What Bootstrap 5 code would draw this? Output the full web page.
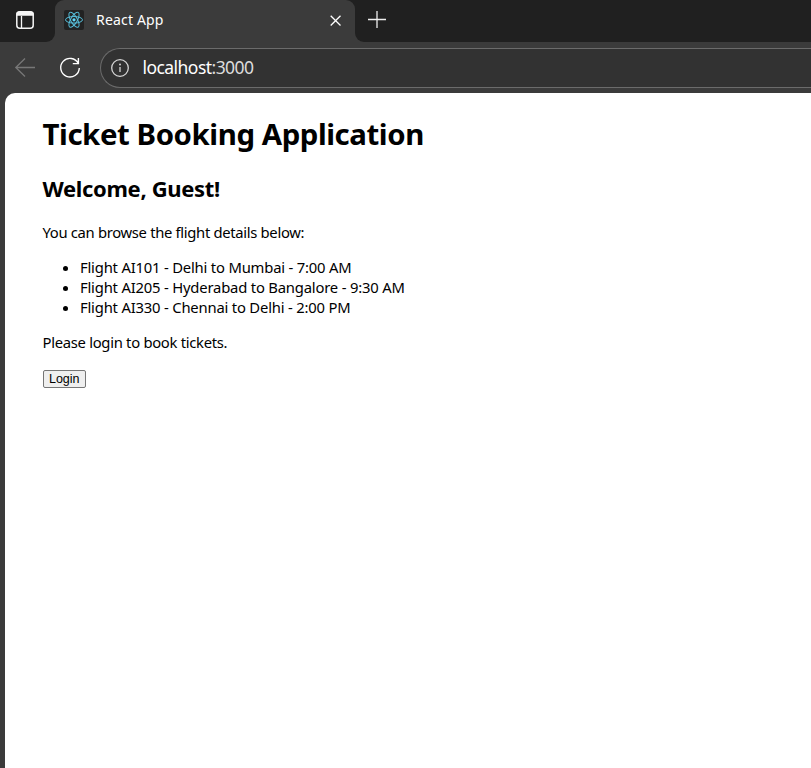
<!DOCTYPE html>
<html lang="en">
<head>
<meta charset="utf-8">
<meta name="viewport" content="width=device-width, initial-scale=1">
<title>React App</title>
<link rel="stylesheet" href="https://cdn.jsdelivr.net/npm/bootstrap@5.3.0/dist/css/bootstrap.min.css">
<style>
body{background:#3b3b3b;font-family:"Noto Sans","Open Sans",sans-serif}
svg{display:block;flex:none}
.tabstrip{height:42px;background:#3b3b3b}
.strip-left{width:55px;background:#202020;border-bottom-right-radius:9px}
.strip-right{background:#202020;border-bottom-left-radius:9px}
.tab-wrap{width:300px;background:#202020}
.tab-face{background:#3b3b3b;border-radius:9px 9px 0 0;padding:0 12px 2px 9px}
.tab-title{color:#fff;font-size:14px;letter-spacing:.18px;margin-left:12px;line-height:20px}
.toolbar{height:51px}
.address{height:40px;margin:6px 0 5px;border:1px solid #6b6b6b;border-right:0;border-radius:20px 0 0 20px;background:#323232;color:#fff;font-size:17.5px;padding-left:9px}
.address .url{margin-left:12.5px;padding-bottom:2px;line-height:24px;letter-spacing:-.55px}
.address .port{color:#dcdcdc}
.viewport{background:#fff;margin-left:5px;border-top-left-radius:10px;padding:21px 0 0 37.5px;color:#000;font-size:14.8px;line-height:20px}
.viewport h1{font-size:29.4px;line-height:40px;font-weight:700;margin:0 0 19px;letter-spacing:-.43px}
.viewport h2{font-size:22px;line-height:30px;font-weight:700;margin:0 0 19px;letter-spacing:-.33px}
.viewport p{margin:0 0 15px;letter-spacing:-.29px}
.viewport ul{margin:0 0 15px;padding-left:37.5px;letter-spacing:-.19px}
.viewport .intro{letter-spacing:-.32px}
.login{display:block;font:12.5px/15px "Liberation Sans",Arial,sans-serif;border:1px solid #767676;border-radius:2px;background:#efefef;color:#000;width:43.5px;height:18px;padding:0;margin-top:18px}
</style>
</head>
<body class="vh-100 overflow-hidden d-flex flex-column">
<header>
<div class="tabstrip d-flex">
<div class="strip-left d-flex">
<svg width="55" height="42" fill="none" stroke="#f5f5f5"><rect x="16.8" y="11.8" width="16.4" height="16.4" rx="3" stroke-width="1.5"/><path d="M17 15v-1q0-2 3-2h10q3 0 3 2v1z" fill="#f5f5f5" stroke-width="1.5"/><path d="M21.5 16v12" stroke-width="1.3"/></svg>
</div>
<div class="tab-wrap"><div class="tab-face h-100 d-flex align-items-center">
<svg width="20" height="20" viewBox="0 0 20 20" fill="none" stroke="#61dafb"><rect width="20" height="20" rx="2" fill="#222" stroke="none"/><g stroke-width="1" opacity=".85"><ellipse cx="10" cy="9.8" rx="8.5" ry="3.3"/><ellipse cx="10" cy="9.8" rx="8.5" ry="3.3" transform="rotate(60 10 9.8)"/><ellipse cx="10" cy="9.8" rx="8.5" ry="3.3" transform="rotate(120 10 9.8)"/></g><circle cx="10" cy="9.8" r="1.6" fill="#61dafb" stroke="none"/></svg>
<span class="tab-title">React App</span>
<svg class="ms-auto" width="14" height="14" stroke="#fff" stroke-width="1.3"><path d="M1.7 2.7l9.8 9.8M11.5 2.7l-9.8 9.8"/></svg>
</div></div>
<div class="strip-right flex-grow-1">
<svg width="44" height="42" stroke="#eee" stroke-width="1.3"><path d="M13 19.5h18M22 11v17"/></svg>
</div>
</div>
<div class="toolbar d-flex">
<svg width="50" height="51" fill="none"><path d="M35 25.5H15.5M25 16.5l-9.2 9 9.2 9" stroke="#777" stroke-width="1.3"/></svg>
<svg width="50" height="51" fill="none" stroke="#fff" stroke-width="1.4"><path d="M28.3 21.5A9.3 9.3 0 1 0 29.3 26M28.4 16v5.6h-5.6"/></svg>
<div class="address flex-grow-1 d-flex align-items-center">
<svg width="20" height="20" fill="none" stroke="#d5d5d5" stroke-width="1.3"><circle cx="10" cy="10" r="8.3"/><path d="M10 9v5"/><circle cx="10" cy="6.5" r="1" fill="#d5d5d5" stroke="none"/></svg>
<span class="url">localhost<span class="port">:3000</span></span>
</div>
</div>
</header>
<main class="viewport flex-grow-1">
<h1>Ticket Booking Application</h1>
<h2>Welcome, Guest!</h2>
<p class="intro">You can browse the flight details below:</p>
<ul>
<li>Flight AI101 - Delhi to Mumbai - 7:00 AM</li>
<li>Flight AI205 - Hyderabad to Bangalore - 9:30 AM</li>
<li>Flight AI330 - Chennai to Delhi - 2:00 PM</li>
</ul>
<p>Please login to book tickets.</p>
<button class="login" type="button">Login</button>
</main>
<script src="https://cdn.jsdelivr.net/npm/bootstrap@5.3.0/dist/js/bootstrap.bundle.min.js"></script>
</body>
</html>
